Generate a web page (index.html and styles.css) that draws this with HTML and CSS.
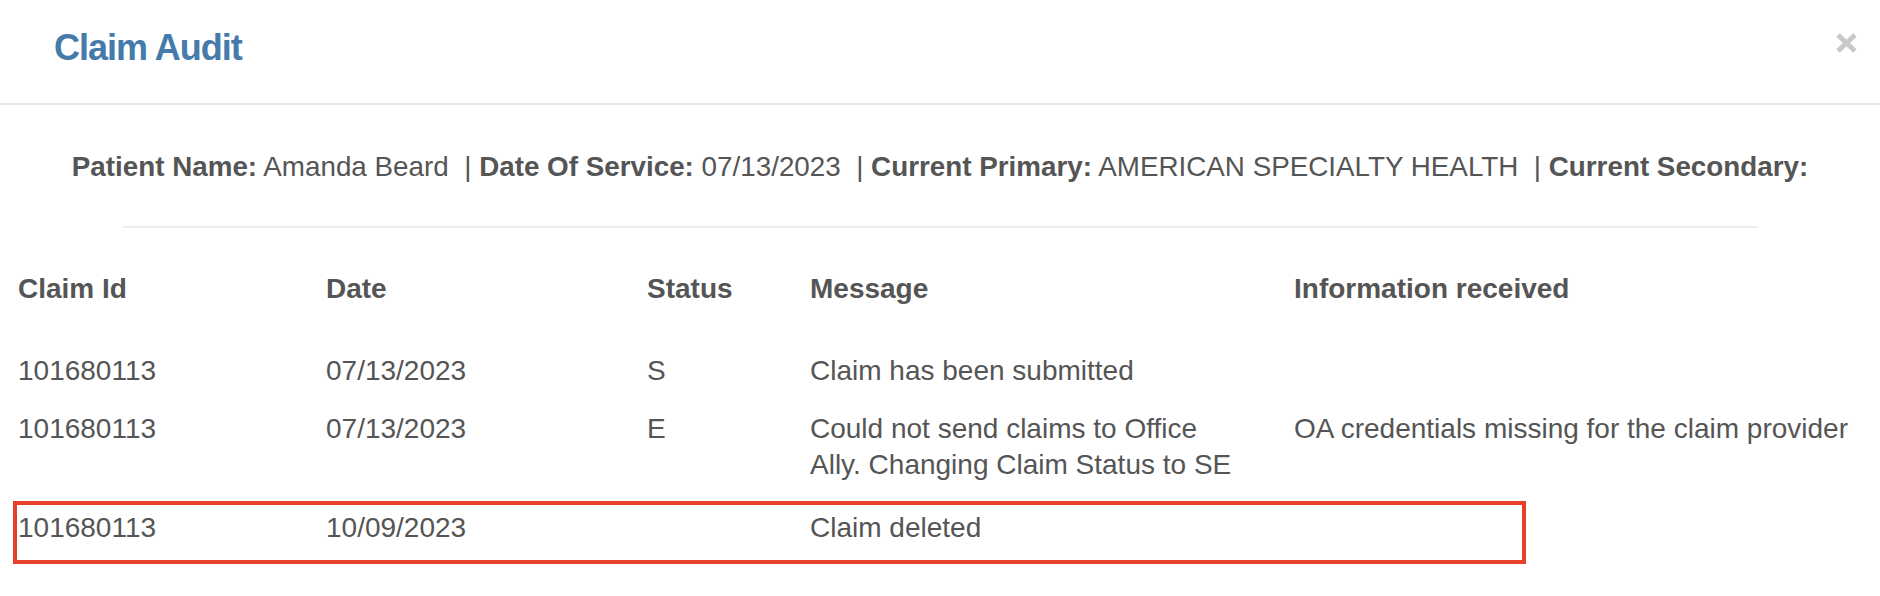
FILE: index.html
```html
<!DOCTYPE html>
<html lang="en">
<head>
    <meta charset="UTF-8">
    <meta name="viewport" content="width=device-width, initial-scale=1.0">
    <title>Claim Audit</title>
    <link rel="stylesheet" href="styles.css">
</head>
<body>
    <div class="modal">
        <div class="modal-header">
            <h4 class="modal-title">Claim Audit</h4>
            <button type="button" class="close" aria-label="Close">
                <svg width="21" height="20" viewBox="0 0 21 20">
                    <path d="M2 2 L19 18 M19 2 L2 18" stroke="#c9c9c9" stroke-width="5" fill="none"/>
                </svg>
            </button>
        </div>

        <div class="modal-body">
            <p class="claim-info">
                <b>Patient Name:</b> Amanda Beard &nbsp;| <b>Date Of Service:</b> 07/13/2023 &nbsp;| <b>Current Primary:</b> AMERICAN SPECIALTY HEALTH &nbsp;| <b>Current Secondary:</b>
            </p>
            <hr>

            <div class="audit-wrap">
                <table class="audit-table">
                    <colgroup>
                        <col class="col-id">
                        <col class="col-date">
                        <col class="col-status">
                        <col class="col-message">
                        <col>
                    </colgroup>
                    <thead>
                        <tr>
                            <th>Claim Id</th>
                            <th>Date</th>
                            <th>Status</th>
                            <th>Message</th>
                            <th>Information received</th>
                        </tr>
                    </thead>
                    <tbody>
                        <tr>
                            <td>101680113</td>
                            <td>07/13/2023</td>
                            <td>S</td>
                            <td>Claim has been submitted</td>
                            <td></td>
                        </tr>
                        <tr>
                            <td>101680113</td>
                            <td>07/13/2023</td>
                            <td>E</td>
                            <td>Could not send claims to Office Ally. Changing Claim Status to SE</td>
                            <td>OA credentials missing for the claim provider</td>
                        </tr>
                        <tr class="deleted">
                            <td>101680113</td>
                            <td>10/09/2023</td>
                            <td></td>
                            <td>Claim deleted</td>
                            <td></td>
                        </tr>
                    </tbody>
                </table>
                <div class="row-highlight"></div>
            </div>
        </div>
    </div>
</body>
</html>
```

FILE: styles.css
```css
body {
    font-family: "Liberation Sans", Arial, Helvetica, sans-serif;
    margin: 0;
    background-color: #ffffff;
    color: #555555;
}

.modal {
    width: 100%;
}

.modal-header {
    display: flex;
    justify-content: space-between;
    align-items: flex-start;
    padding: 28px 23px 35px 54px;
    border-bottom: 2px solid #e5e5e5;
}

.modal-title {
    margin: 0;
    font-size: 36px;
    line-height: 40px;
    font-weight: bold;
    letter-spacing: -1px;
    color: #457bab;
}

.close {
    margin-top: 5px;
    padding: 0;
    border: none;
    background: none;
    line-height: 0;
    cursor: pointer;
}

.modal-body {
    padding-top: 42px;
    padding-bottom: 40px;
}

.claim-info {
    margin: 0;
    font-size: 27.8px;
    line-height: 40px;
    text-align: center;
    white-space: nowrap;
}

.claim-info b {
    font-weight: bold;
}

hr {
    height: 0;
    border: 0;
    border-top: 2px solid #eeeeee;
    margin: 39px 122px 0 123px;
}

.audit-wrap {
    position: relative;
    margin-top: 31px;
}

.audit-table {
    width: 100%;
    border-collapse: collapse;
    table-layout: fixed;
    font-size: 28px;
    line-height: 36px;
}

.col-id {
    width: 308px;
}

.col-date {
    width: 321px;
}

.col-status {
    width: 163px;
}

.col-message {
    width: 484px;
}

.audit-table th,
.audit-table td {
    text-align: left;
    vertical-align: top;
    padding: 12px 30px 12px 18px;
}

.audit-table th {
    font-weight: bold;
    padding-bottom: 34px;
}

.audit-table tbody tr:first-child td {
    padding-bottom: 10px;
}

.audit-table tr.deleted td {
    padding-top: 15px;
}

.audit-table th:last-child,
.audit-table td:last-child {
    padding-right: 0;
}

.row-highlight {
    position: absolute;
    left: 13px;
    top: 242px;
    width: 1513px;
    height: 63px;
    box-sizing: border-box;
    border: 4px solid #e6402a;
    pointer-events: none;
}
```
